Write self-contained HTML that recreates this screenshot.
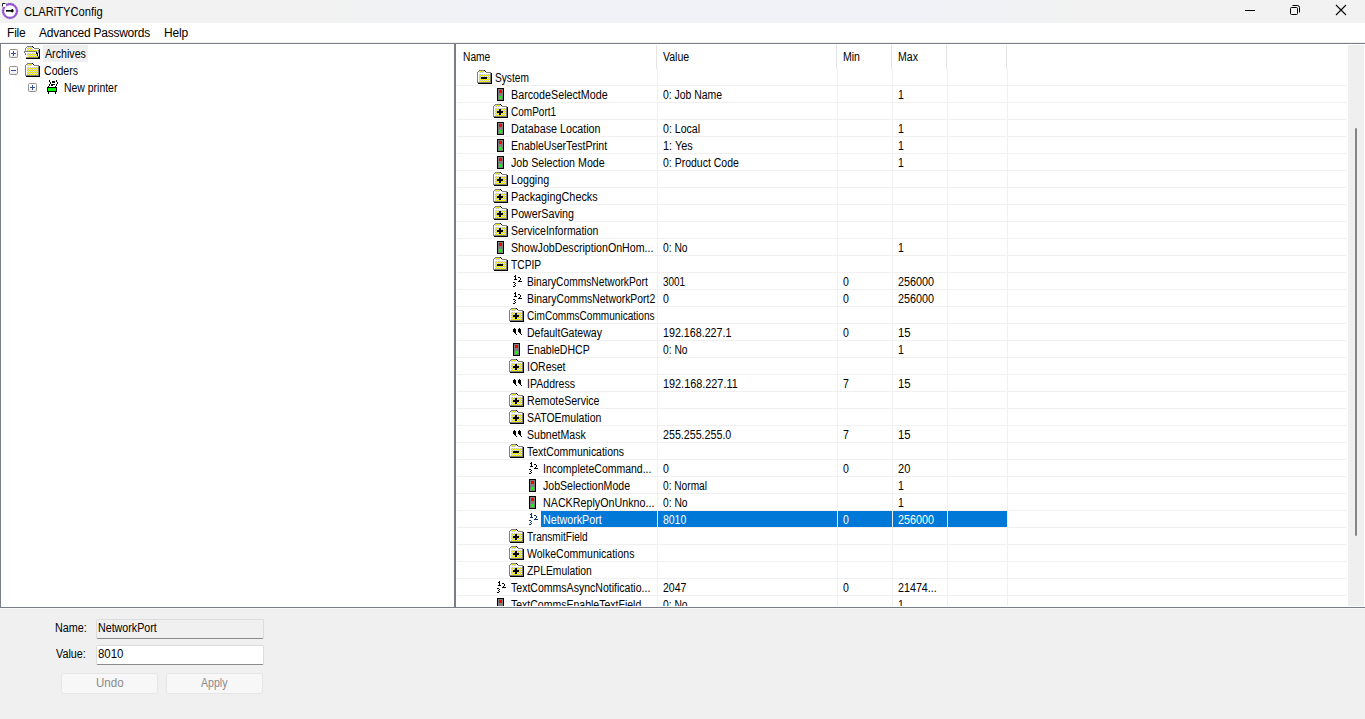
<!DOCTYPE html><html><head><meta charset="utf-8"><style>
html,body{margin:0;padding:0}
body{width:1365px;height:719px;position:relative;overflow:hidden;background:#f0f0f0;font-family:"Liberation Sans", sans-serif;}
.a{position:absolute}
.t{position:absolute;white-space:nowrap;line-height:16px;height:16px;font-size:11px;letter-spacing:-0.3px;transform-origin:0 0}
</style></head><body>
<svg width="0" height="0" style="position:absolute"><defs><linearGradient id="eg" x1="0" y1="0" x2="0" y2="1"><stop offset="0" stop-color="#ffffff"/><stop offset="0.55" stop-color="#fbfbfb"/><stop offset="1" stop-color="#e6e6e6"/></linearGradient><pattern id="dy" width="2" height="2" patternUnits="userSpaceOnUse"><rect width="2" height="2" fill="#c0c0c0"/><rect width="1" height="1" fill="#ffff00"/><rect x="1" y="1" width="1" height="1" fill="#ffff00"/></pattern></defs></svg>

<div class="a" style="left:0;top:0;width:1365px;height:23px;background:linear-gradient(90deg,#f2f2f2 0px,#f2f2f2 330px,#f0f2f7 470px,#f0f2f7 930px,#f2f2f2 1080px,#f2f2f2 1365px)"></div>
<svg class="a" style="left:0px;top:0px" width="20" height="22"><circle cx="10" cy="11" r="6.9" fill="#fff" stroke="#9657d2" stroke-width="2.1"/><circle cx="10" cy="11" r="7.9" fill="none" stroke="#2a1450" stroke-width="0.5" stroke-dasharray="1 1.5" opacity="0.7"/><rect x="2" y="3" width="4" height="4" fill="#fff"/><path d="M2.5 3.5 H5.5 M2.5 3.5 V6.5" stroke="#000" stroke-width="0.9"/><rect x="6" y="10" width="6" height="1.6" fill="#000"/><ellipse cx="12.3" cy="10.8" rx="1.3" ry="1.8" fill="#000"/></svg>
<div class="t" style="left:24px;top:4px;font-size:12px;line-height:17px;height:17px;color:#000;letter-spacing:0;transform:scaleX(0.930)">CLARiTYConfig</div>
<div class="a" style="left:1245px;top:10px;width:10px;height:1px;background:#000"></div>
<svg class="a" style="left:1289px;top:4px" width="12" height="12"><rect x="1.5" y="3.5" width="7" height="7" rx="1" fill="none" stroke="#000" stroke-width="1"/><path d="M3.5 1.5 H8.5 Q10.5 1.5 10.5 3.5 V8.5" fill="none" stroke="#000" stroke-width="1"/></svg>
<svg class="a" style="left:1335px;top:4px" width="12" height="12"><path d="M1 1 L11 11 M11 1 L1 11" stroke="#000" stroke-width="1.1"/></svg>
<div class="a" style="left:0;top:23px;width:1365px;height:19px;background:#fff"></div>
<div class="t" style="left:7px;top:25px;font-size:12px;color:#000;letter-spacing:-0.2px;line-height:17px">File</div>
<div class="t" style="left:39px;top:25px;font-size:12px;color:#000;letter-spacing:-0.25px;line-height:17px">Advanced Passwords</div>
<div class="t" style="left:164px;top:25px;font-size:12px;color:#000;letter-spacing:-0.2px;line-height:17px">Help</div>
<div class="a" style="left:0;top:42px;width:1365px;height:1px;background:#f0f0f0"></div>
<div class="a" style="left:0;top:43px;width:1365px;height:1px;background:#7a7e87"></div>
<div class="a" style="left:0;top:44px;width:454px;height:563px;background:#fff"></div>
<div class="a" style="left:0;top:43px;width:1px;height:565px;background:#7a7e87"></div>
<div class="a" style="left:456px;top:44px;width:909px;height:563px;background:#fff"></div>
<div class="a" style="left:454px;top:43px;width:2px;height:565px;background:#7a7e87"></div>
<div class="a" style="left:0;top:607px;width:1365px;height:1px;background:#7a7e87"></div>
<div class="a" style="left:0;top:608px;width:1365px;height:1px;background:#f7f7f7"></div>
<svg style="position:absolute;left:9px;top:49px" width="9" height="9"><rect x="0.5" y="0.5" width="8" height="8" rx="1.2" fill="url(#eg)" stroke="#929292" stroke-width="1"/><rect x="2" y="4" width="5" height="1" fill="#2f4f9a" shape-rendering="crispEdges"/><rect x="4" y="2" width="1" height="5" fill="#2f4f9a" shape-rendering="crispEdges"/></svg>
<svg style="position:absolute;left:9px;top:66px" width="9" height="9"><rect x="0.5" y="0.5" width="8" height="8" rx="1.2" fill="url(#eg)" stroke="#929292" stroke-width="1"/><rect x="2" y="4" width="5" height="1" fill="#2f4f9a" shape-rendering="crispEdges"/></svg>
<svg style="position:absolute;left:28px;top:83px" width="9" height="9"><rect x="0.5" y="0.5" width="8" height="8" rx="1.2" fill="url(#eg)" stroke="#929292" stroke-width="1"/><rect x="2" y="4" width="5" height="1" fill="#2f4f9a" shape-rendering="crispEdges"/><rect x="4" y="2" width="1" height="5" fill="#2f4f9a" shape-rendering="crispEdges"/></svg>
<svg style="position:absolute;left:24px;top:46px" width="16" height="13" shape-rendering="crispEdges"><rect x="3" y="0" width="5" height="1" fill="#808080"/><rect x="8" y="0" width="1" height="1" fill="#000000"/><rect x="2" y="1" width="1" height="1" fill="#808080"/><rect x="3" y="1" width="1" height="1" fill="#ffffff"/><rect x="4" y="1" width="5" height="1" fill="url(#dy)"/><rect x="9" y="1" width="1" height="1" fill="#000000"/><rect x="1" y="2" width="1" height="1" fill="#808080"/><rect x="2" y="2" width="1" height="1" fill="#ffffff"/><rect x="3" y="2" width="5" height="1" fill="url(#dy)"/><rect x="8" y="2" width="2" height="1" fill="#ffffff"/><rect x="10" y="2" width="5" height="1" fill="#808080"/><rect x="1" y="3" width="1" height="1" fill="#808080"/><rect x="2" y="3" width="1" height="1" fill="#ffffff"/><rect x="3" y="3" width="6" height="1" fill="url(#dy)"/><rect x="9" y="3" width="5" height="1" fill="#ffffff"/><rect x="15" y="3" width="1" height="1" fill="#000000"/><rect x="1" y="4" width="1" height="1" fill="#808080"/><rect x="2" y="4" width="1" height="1" fill="#ffffff"/><rect x="3" y="4" width="11" height="1" fill="url(#dy)"/><rect x="14" y="4" width="1" height="1" fill="#808080"/><rect x="15" y="4" width="1" height="1" fill="#000000"/><rect x="0" y="5" width="13" height="1" fill="#808080"/><rect x="13" y="5" width="1" height="1" fill="url(#dy)"/><rect x="14" y="5" width="1" height="1" fill="#808080"/><rect x="15" y="5" width="1" height="1" fill="#000000"/><rect x="0" y="6" width="1" height="1" fill="#808080"/><rect x="1" y="6" width="11" height="1" fill="#ffffff"/><rect x="12" y="6" width="1" height="1" fill="#000000"/><rect x="13" y="6" width="1" height="1" fill="url(#dy)"/><rect x="14" y="6" width="1" height="1" fill="#808080"/><rect x="15" y="6" width="1" height="1" fill="#000000"/><rect x="1" y="7" width="1" height="1" fill="#808080"/><rect x="2" y="7" width="1" height="1" fill="#ffffff"/><rect x="3" y="7" width="9" height="1" fill="url(#dy)"/><rect x="12" y="7" width="2" height="1" fill="#000000"/><rect x="15" y="7" width="1" height="1" fill="#000000"/><rect x="1" y="8" width="1" height="1" fill="#808080"/><rect x="2" y="8" width="1" height="1" fill="#ffffff"/><rect x="3" y="8" width="10" height="1" fill="url(#dy)"/><rect x="13" y="8" width="1" height="1" fill="#000000"/><rect x="15" y="8" width="1" height="1" fill="#000000"/><rect x="2" y="9" width="1" height="1" fill="#ffffff"/><rect x="3" y="9" width="10" height="1" fill="url(#dy)"/><rect x="13" y="9" width="1" height="1" fill="#000000"/><rect x="15" y="9" width="1" height="1" fill="#000000"/><rect x="3" y="10" width="1" height="1" fill="#ffffff"/><rect x="4" y="10" width="10" height="1" fill="url(#dy)"/><rect x="14" y="10" width="1" height="1" fill="#808080"/><rect x="15" y="10" width="1" height="1" fill="#000000"/><rect x="2" y="11" width="12" height="1" fill="#808080"/><rect x="14" y="11" width="2" height="1" fill="#000000"/><rect x="2" y="12" width="14" height="1" fill="#000000"/></svg>
<div class="a" style="left:43px;top:45px;width:45px;height:17px;background:#efefef"></div>
<div class="t" style="left:45px;top:46px;font-size:12px;line-height:17px;height:17px;color:#000;letter-spacing:0;transform:scaleX(0.890)">Archives</div>
<svg style="position:absolute;left:25px;top:63px" width="15" height="14" shape-rendering="crispEdges"><rect x="2" y="1" width="5" height="2" fill="url(#dy)"/><rect x="2" y="4" width="11" height="8" fill="url(#dy)"/><rect x="2" y="0" width="5" height="1" fill="#808080"/><rect x="0" y="2" width="1" height="11" fill="#808080"/><rect x="1" y="1" width="1" height="1" fill="#808080"/><rect x="9" y="2" width="5" height="1" fill="#808080"/><rect x="13" y="3" width="1" height="10" fill="#808080"/><rect x="1" y="12" width="13" height="1" fill="#808080"/><rect x="1" y="3" width="1" height="9" fill="#ffffff"/><rect x="1" y="3" width="12" height="1" fill="#ffffff"/><rect x="7" y="3" width="2" height="1" fill="#ffffff"/><rect x="7" y="0" width="1" height="1" fill="#000000"/><rect x="8" y="1" width="1" height="1" fill="#000000"/><rect x="14" y="3" width="1" height="11" fill="#000000"/><rect x="1" y="13" width="14" height="1" fill="#000000"/></svg>
<div class="t" style="left:44px;top:63px;font-size:12px;line-height:17px;height:17px;color:#000;letter-spacing:0;transform:scaleX(0.880)">Coders</div>
<svg style="position:absolute;left:47px;top:80px" width="11" height="14" shape-rendering="crispEdges"><rect x="2" y="0" width="1" height="1" fill="#000000"/><rect x="9" y="0" width="1" height="1" fill="#000000"/><rect x="2" y="1" width="1" height="1" fill="#000000"/><rect x="5" y="1" width="3" height="1" fill="#000000"/><rect x="9" y="1" width="1" height="1" fill="#000000"/><rect x="3" y="2" width="1" height="1" fill="#000000"/><rect x="5" y="2" width="3" height="1" fill="#000000"/><rect x="10" y="2" width="1" height="1" fill="#000000"/><rect x="3" y="3" width="1" height="1" fill="#000000"/><rect x="10" y="3" width="1" height="1" fill="#000000"/><rect x="2" y="4" width="1" height="1" fill="#000000"/><rect x="4" y="4" width="4" height="1" fill="#000000"/><rect x="9" y="4" width="1" height="1" fill="#000000"/><rect x="2" y="5" width="1" height="1" fill="#000000"/><rect x="4" y="5" width="2" height="1" fill="#000000"/><rect x="9" y="5" width="1" height="1" fill="#000000"/><rect x="1" y="6" width="1" height="1" fill="#000000"/><rect x="8" y="6" width="1" height="1" fill="#000000"/><rect x="0" y="7" width="10" height="1" fill="#000000"/><rect x="0" y="8" width="1" height="1" fill="#000000"/><rect x="1" y="8" width="8" height="1" fill="#00ff00"/><rect x="9" y="8" width="1" height="1" fill="#000000"/><rect x="0" y="9" width="1" height="1" fill="#000000"/><rect x="1" y="9" width="8" height="1" fill="#00ff00"/><rect x="9" y="9" width="1" height="1" fill="#000000"/><rect x="0" y="10" width="1" height="1" fill="#000000"/><rect x="1" y="10" width="8" height="1" fill="#00ff00"/><rect x="9" y="10" width="1" height="1" fill="#000000"/><rect x="0" y="11" width="10" height="1" fill="#000000"/><rect x="1" y="12" width="1" height="1" fill="#000000"/><rect x="8" y="12" width="1" height="1" fill="#000000"/><rect x="1" y="13" width="1" height="1" fill="#000000"/><rect x="8" y="13" width="1" height="1" fill="#000000"/></svg>
<div class="t" style="left:64px;top:80px;font-size:12px;line-height:17px;height:17px;color:#000;letter-spacing:0;transform:scaleX(0.870)">New printer</div>
<div class="t" style="left:463px;top:49px;font-size:12px;color:#000;letter-spacing:0;transform:scaleX(0.852)">Name</div>
<div class="t" style="left:663px;top:49px;font-size:12px;color:#000;letter-spacing:0;transform:scaleX(0.878)">Value</div>
<div class="t" style="left:843px;top:49px;font-size:12px;color:#000;letter-spacing:0;transform:scaleX(0.878)">Min</div>
<div class="t" style="left:898px;top:49px;font-size:12px;color:#000;letter-spacing:0;transform:scaleX(0.878)">Max</div>
<div class="a" style="left:656px;top:45px;width:1px;height:24px;background:#e5e5e5"></div>
<div class="a" style="left:836px;top:45px;width:1px;height:24px;background:#e5e5e5"></div>
<div class="a" style="left:891px;top:45px;width:1px;height:24px;background:#e5e5e5"></div>
<div class="a" style="left:946px;top:45px;width:1px;height:24px;background:#e5e5e5"></div>
<div class="a" style="left:1006px;top:45px;width:1px;height:24px;background:#e5e5e5"></div>
<div class="a" style="left:456px;top:69px;width:892px;height:537px;overflow:hidden">
<svg style="position:absolute;left:21px;top:1px" width="15" height="14" shape-rendering="crispEdges"><rect x="2" y="1" width="5" height="2" fill="url(#dy)"/><rect x="2" y="4" width="11" height="8" fill="url(#dy)"/><rect x="2" y="0" width="5" height="1" fill="#808080"/><rect x="0" y="2" width="1" height="11" fill="#808080"/><rect x="1" y="1" width="1" height="1" fill="#808080"/><rect x="9" y="2" width="5" height="1" fill="#808080"/><rect x="13" y="3" width="1" height="10" fill="#808080"/><rect x="1" y="12" width="13" height="1" fill="#808080"/><rect x="1" y="3" width="1" height="9" fill="#ffffff"/><rect x="1" y="3" width="12" height="1" fill="#ffffff"/><rect x="7" y="3" width="2" height="1" fill="#ffffff"/><rect x="7" y="0" width="1" height="1" fill="#000000"/><rect x="8" y="1" width="1" height="1" fill="#000000"/><rect x="14" y="3" width="1" height="11" fill="#000000"/><rect x="1" y="13" width="14" height="1" fill="#000000"/><rect x="4" y="7" width="6" height="2" fill="#000"/></svg>
<div class="t" style="left:39px;top:1px;font-size:12px;color:#000;letter-spacing:0;transform:scaleX(0.846)">System</div>
<div class="a" style="left:1px;top:16px;width:890px;height:1px;background:#f0f0f0"></div>
<svg style="position:absolute;left:41px;top:19px" width="7" height="13" shape-rendering="crispEdges"><rect x="0" y="0" width="7" height="13" fill="#000"/><rect x="1" y="1" width="5" height="11" fill="#808080"/><rect x="2" y="2" width="3" height="3" fill="#ff0000"/><rect x="2" y="8" width="3" height="3" fill="#00ff00"/></svg>
<div class="t" style="left:55px;top:18px;font-size:12px;color:#000;letter-spacing:0;transform:scaleX(0.895)">BarcodeSelectMode</div>
<div class="t" style="left:207px;top:18px;font-size:12px;color:#000;letter-spacing:0;transform:scaleX(0.868)">0: Job Name</div>
<div class="t" style="left:442px;top:18px;font-size:12px;color:#000;letter-spacing:0;transform:scaleX(0.878)">1</div>
<div class="a" style="left:1px;top:33px;width:890px;height:1px;background:#f0f0f0"></div>
<svg style="position:absolute;left:37px;top:35px" width="15" height="14" shape-rendering="crispEdges"><rect x="2" y="1" width="5" height="2" fill="url(#dy)"/><rect x="2" y="4" width="11" height="8" fill="url(#dy)"/><rect x="2" y="0" width="5" height="1" fill="#808080"/><rect x="0" y="2" width="1" height="11" fill="#808080"/><rect x="1" y="1" width="1" height="1" fill="#808080"/><rect x="9" y="2" width="5" height="1" fill="#808080"/><rect x="13" y="3" width="1" height="10" fill="#808080"/><rect x="1" y="12" width="13" height="1" fill="#808080"/><rect x="1" y="3" width="1" height="9" fill="#ffffff"/><rect x="1" y="3" width="12" height="1" fill="#ffffff"/><rect x="7" y="3" width="2" height="1" fill="#ffffff"/><rect x="7" y="0" width="1" height="1" fill="#000000"/><rect x="8" y="1" width="1" height="1" fill="#000000"/><rect x="14" y="3" width="1" height="11" fill="#000000"/><rect x="1" y="13" width="14" height="1" fill="#000000"/><rect x="4" y="7" width="6" height="2" fill="#000"/><rect x="6" y="5" width="2" height="6" fill="#000"/></svg>
<div class="t" style="left:55px;top:35px;font-size:12px;color:#000;letter-spacing:0;transform:scaleX(0.835)">ComPort1</div>
<div class="a" style="left:1px;top:50px;width:890px;height:1px;background:#f0f0f0"></div>
<svg style="position:absolute;left:41px;top:53px" width="7" height="13" shape-rendering="crispEdges"><rect x="0" y="0" width="7" height="13" fill="#000"/><rect x="1" y="1" width="5" height="11" fill="#808080"/><rect x="2" y="2" width="3" height="3" fill="#ff0000"/><rect x="2" y="8" width="3" height="3" fill="#00ff00"/></svg>
<div class="t" style="left:55px;top:52px;font-size:12px;color:#000;letter-spacing:0;transform:scaleX(0.895)">Database Location</div>
<div class="t" style="left:207px;top:52px;font-size:12px;color:#000;letter-spacing:0;transform:scaleX(0.881)">0: Local</div>
<div class="t" style="left:442px;top:52px;font-size:12px;color:#000;letter-spacing:0;transform:scaleX(0.878)">1</div>
<div class="a" style="left:1px;top:67px;width:890px;height:1px;background:#f0f0f0"></div>
<svg style="position:absolute;left:41px;top:70px" width="7" height="13" shape-rendering="crispEdges"><rect x="0" y="0" width="7" height="13" fill="#000"/><rect x="1" y="1" width="5" height="11" fill="#808080"/><rect x="2" y="2" width="3" height="3" fill="#ff0000"/><rect x="2" y="8" width="3" height="3" fill="#00ff00"/></svg>
<div class="t" style="left:55px;top:69px;font-size:12px;color:#000;letter-spacing:0;transform:scaleX(0.879)">EnableUserTestPrint</div>
<div class="t" style="left:207px;top:69px;font-size:12px;color:#000;letter-spacing:0;transform:scaleX(0.906)">1: Yes</div>
<div class="t" style="left:442px;top:69px;font-size:12px;color:#000;letter-spacing:0;transform:scaleX(0.878)">1</div>
<div class="a" style="left:1px;top:84px;width:890px;height:1px;background:#f0f0f0"></div>
<svg style="position:absolute;left:41px;top:87px" width="7" height="13" shape-rendering="crispEdges"><rect x="0" y="0" width="7" height="13" fill="#000"/><rect x="1" y="1" width="5" height="11" fill="#808080"/><rect x="2" y="2" width="3" height="3" fill="#ff0000"/><rect x="2" y="8" width="3" height="3" fill="#00ff00"/></svg>
<div class="t" style="left:55px;top:86px;font-size:12px;color:#000;letter-spacing:0;transform:scaleX(0.889)">Job Selection Mode</div>
<div class="t" style="left:207px;top:86px;font-size:12px;color:#000;letter-spacing:0;transform:scaleX(0.874)">0: Product Code</div>
<div class="t" style="left:442px;top:86px;font-size:12px;color:#000;letter-spacing:0;transform:scaleX(0.878)">1</div>
<div class="a" style="left:1px;top:101px;width:890px;height:1px;background:#f0f0f0"></div>
<svg style="position:absolute;left:37px;top:103px" width="15" height="14" shape-rendering="crispEdges"><rect x="2" y="1" width="5" height="2" fill="url(#dy)"/><rect x="2" y="4" width="11" height="8" fill="url(#dy)"/><rect x="2" y="0" width="5" height="1" fill="#808080"/><rect x="0" y="2" width="1" height="11" fill="#808080"/><rect x="1" y="1" width="1" height="1" fill="#808080"/><rect x="9" y="2" width="5" height="1" fill="#808080"/><rect x="13" y="3" width="1" height="10" fill="#808080"/><rect x="1" y="12" width="13" height="1" fill="#808080"/><rect x="1" y="3" width="1" height="9" fill="#ffffff"/><rect x="1" y="3" width="12" height="1" fill="#ffffff"/><rect x="7" y="3" width="2" height="1" fill="#ffffff"/><rect x="7" y="0" width="1" height="1" fill="#000000"/><rect x="8" y="1" width="1" height="1" fill="#000000"/><rect x="14" y="3" width="1" height="11" fill="#000000"/><rect x="1" y="13" width="14" height="1" fill="#000000"/><rect x="4" y="7" width="6" height="2" fill="#000"/><rect x="6" y="5" width="2" height="6" fill="#000"/></svg>
<div class="t" style="left:55px;top:103px;font-size:12px;color:#000;letter-spacing:0;transform:scaleX(0.893)">Logging</div>
<div class="a" style="left:1px;top:118px;width:890px;height:1px;background:#f0f0f0"></div>
<svg style="position:absolute;left:37px;top:120px" width="15" height="14" shape-rendering="crispEdges"><rect x="2" y="1" width="5" height="2" fill="url(#dy)"/><rect x="2" y="4" width="11" height="8" fill="url(#dy)"/><rect x="2" y="0" width="5" height="1" fill="#808080"/><rect x="0" y="2" width="1" height="11" fill="#808080"/><rect x="1" y="1" width="1" height="1" fill="#808080"/><rect x="9" y="2" width="5" height="1" fill="#808080"/><rect x="13" y="3" width="1" height="10" fill="#808080"/><rect x="1" y="12" width="13" height="1" fill="#808080"/><rect x="1" y="3" width="1" height="9" fill="#ffffff"/><rect x="1" y="3" width="12" height="1" fill="#ffffff"/><rect x="7" y="3" width="2" height="1" fill="#ffffff"/><rect x="7" y="0" width="1" height="1" fill="#000000"/><rect x="8" y="1" width="1" height="1" fill="#000000"/><rect x="14" y="3" width="1" height="11" fill="#000000"/><rect x="1" y="13" width="14" height="1" fill="#000000"/><rect x="4" y="7" width="6" height="2" fill="#000"/><rect x="6" y="5" width="2" height="6" fill="#000"/></svg>
<div class="t" style="left:55px;top:120px;font-size:12px;color:#000;letter-spacing:0;transform:scaleX(0.902)">PackagingChecks</div>
<div class="a" style="left:1px;top:135px;width:890px;height:1px;background:#f0f0f0"></div>
<svg style="position:absolute;left:37px;top:137px" width="15" height="14" shape-rendering="crispEdges"><rect x="2" y="1" width="5" height="2" fill="url(#dy)"/><rect x="2" y="4" width="11" height="8" fill="url(#dy)"/><rect x="2" y="0" width="5" height="1" fill="#808080"/><rect x="0" y="2" width="1" height="11" fill="#808080"/><rect x="1" y="1" width="1" height="1" fill="#808080"/><rect x="9" y="2" width="5" height="1" fill="#808080"/><rect x="13" y="3" width="1" height="10" fill="#808080"/><rect x="1" y="12" width="13" height="1" fill="#808080"/><rect x="1" y="3" width="1" height="9" fill="#ffffff"/><rect x="1" y="3" width="12" height="1" fill="#ffffff"/><rect x="7" y="3" width="2" height="1" fill="#ffffff"/><rect x="7" y="0" width="1" height="1" fill="#000000"/><rect x="8" y="1" width="1" height="1" fill="#000000"/><rect x="14" y="3" width="1" height="11" fill="#000000"/><rect x="1" y="13" width="14" height="1" fill="#000000"/><rect x="4" y="7" width="6" height="2" fill="#000"/><rect x="6" y="5" width="2" height="6" fill="#000"/></svg>
<div class="t" style="left:55px;top:137px;font-size:12px;color:#000;letter-spacing:0;transform:scaleX(0.891)">PowerSaving</div>
<div class="a" style="left:1px;top:152px;width:890px;height:1px;background:#f0f0f0"></div>
<svg style="position:absolute;left:37px;top:154px" width="15" height="14" shape-rendering="crispEdges"><rect x="2" y="1" width="5" height="2" fill="url(#dy)"/><rect x="2" y="4" width="11" height="8" fill="url(#dy)"/><rect x="2" y="0" width="5" height="1" fill="#808080"/><rect x="0" y="2" width="1" height="11" fill="#808080"/><rect x="1" y="1" width="1" height="1" fill="#808080"/><rect x="9" y="2" width="5" height="1" fill="#808080"/><rect x="13" y="3" width="1" height="10" fill="#808080"/><rect x="1" y="12" width="13" height="1" fill="#808080"/><rect x="1" y="3" width="1" height="9" fill="#ffffff"/><rect x="1" y="3" width="12" height="1" fill="#ffffff"/><rect x="7" y="3" width="2" height="1" fill="#ffffff"/><rect x="7" y="0" width="1" height="1" fill="#000000"/><rect x="8" y="1" width="1" height="1" fill="#000000"/><rect x="14" y="3" width="1" height="11" fill="#000000"/><rect x="1" y="13" width="14" height="1" fill="#000000"/><rect x="4" y="7" width="6" height="2" fill="#000"/><rect x="6" y="5" width="2" height="6" fill="#000"/></svg>
<div class="t" style="left:55px;top:154px;font-size:12px;color:#000;letter-spacing:0;transform:scaleX(0.873)">ServiceInformation</div>
<div class="a" style="left:1px;top:169px;width:890px;height:1px;background:#f0f0f0"></div>
<svg style="position:absolute;left:41px;top:172px" width="7" height="13" shape-rendering="crispEdges"><rect x="0" y="0" width="7" height="13" fill="#000"/><rect x="1" y="1" width="5" height="11" fill="#808080"/><rect x="2" y="2" width="3" height="3" fill="#ff0000"/><rect x="2" y="8" width="3" height="3" fill="#00ff00"/></svg>
<div class="t" style="left:55px;top:171px;font-size:12px;color:#000;letter-spacing:0;transform:scaleX(0.886)">ShowJobDescriptionOnHom...</div>
<div class="t" style="left:207px;top:171px;font-size:12px;color:#000;letter-spacing:0;transform:scaleX(0.855)">0: No</div>
<div class="t" style="left:442px;top:171px;font-size:12px;color:#000;letter-spacing:0;transform:scaleX(0.878)">1</div>
<div class="a" style="left:1px;top:186px;width:890px;height:1px;background:#f0f0f0"></div>
<svg style="position:absolute;left:37px;top:188px" width="15" height="14" shape-rendering="crispEdges"><rect x="2" y="1" width="5" height="2" fill="url(#dy)"/><rect x="2" y="4" width="11" height="8" fill="url(#dy)"/><rect x="2" y="0" width="5" height="1" fill="#808080"/><rect x="0" y="2" width="1" height="11" fill="#808080"/><rect x="1" y="1" width="1" height="1" fill="#808080"/><rect x="9" y="2" width="5" height="1" fill="#808080"/><rect x="13" y="3" width="1" height="10" fill="#808080"/><rect x="1" y="12" width="13" height="1" fill="#808080"/><rect x="1" y="3" width="1" height="9" fill="#ffffff"/><rect x="1" y="3" width="12" height="1" fill="#ffffff"/><rect x="7" y="3" width="2" height="1" fill="#ffffff"/><rect x="7" y="0" width="1" height="1" fill="#000000"/><rect x="8" y="1" width="1" height="1" fill="#000000"/><rect x="14" y="3" width="1" height="11" fill="#000000"/><rect x="1" y="13" width="14" height="1" fill="#000000"/><rect x="4" y="7" width="6" height="2" fill="#000"/></svg>
<div class="t" style="left:55px;top:188px;font-size:12px;color:#000;letter-spacing:0;transform:scaleX(0.854)">TCPIP</div>
<div class="a" style="left:1px;top:203px;width:890px;height:1px;background:#f0f0f0"></div>
<svg style="position:absolute;left:57px;top:206px" width="9" height="12" shape-rendering="crispEdges"><rect x="2" y="0" width="1" height="5" fill="#000"/><rect x="1" y="1" width="1" height="1" fill="#000"/><rect x="1" y="4" width="3" height="1" fill="#000"/><rect x="5" y="2" width="2" height="1" fill="#000"/><rect x="7" y="3" width="1" height="2" fill="#000"/><rect x="6" y="5" width="1" height="1" fill="#000"/><rect x="5" y="6" width="4" height="1" fill="#000"/><rect x="0" y="7" width="2" height="1" fill="#000"/><rect x="2" y="8" width="1" height="1" fill="#000"/><rect x="1" y="9" width="1" height="1" fill="#000"/><rect x="2" y="10" width="1" height="1" fill="#000"/><rect x="0" y="11" width="2" height="1" fill="#000"/></svg>
<div class="t" style="left:71px;top:205px;font-size:12px;color:#000;letter-spacing:0;transform:scaleX(0.854)">BinaryCommsNetworkPort</div>
<div class="t" style="left:207px;top:205px;font-size:12px;color:#000;letter-spacing:0;transform:scaleX(0.830)">3001</div>
<div class="t" style="left:387px;top:205px;font-size:12px;color:#000;letter-spacing:0;transform:scaleX(0.878)">0</div>
<div class="t" style="left:442px;top:205px;font-size:12px;color:#000;letter-spacing:0;transform:scaleX(0.900)">256000</div>
<div class="a" style="left:1px;top:220px;width:890px;height:1px;background:#f0f0f0"></div>
<svg style="position:absolute;left:57px;top:223px" width="9" height="12" shape-rendering="crispEdges"><rect x="2" y="0" width="1" height="5" fill="#000"/><rect x="1" y="1" width="1" height="1" fill="#000"/><rect x="1" y="4" width="3" height="1" fill="#000"/><rect x="5" y="2" width="2" height="1" fill="#000"/><rect x="7" y="3" width="1" height="2" fill="#000"/><rect x="6" y="5" width="1" height="1" fill="#000"/><rect x="5" y="6" width="4" height="1" fill="#000"/><rect x="0" y="7" width="2" height="1" fill="#000"/><rect x="2" y="8" width="1" height="1" fill="#000"/><rect x="1" y="9" width="1" height="1" fill="#000"/><rect x="2" y="10" width="1" height="1" fill="#000"/><rect x="0" y="11" width="2" height="1" fill="#000"/></svg>
<div class="t" style="left:71px;top:222px;font-size:12px;color:#000;letter-spacing:0;transform:scaleX(0.866)">BinaryCommsNetworkPort2</div>
<div class="t" style="left:207px;top:222px;font-size:12px;color:#000;letter-spacing:0;transform:scaleX(0.878)">0</div>
<div class="t" style="left:387px;top:222px;font-size:12px;color:#000;letter-spacing:0;transform:scaleX(0.878)">0</div>
<div class="t" style="left:442px;top:222px;font-size:12px;color:#000;letter-spacing:0;transform:scaleX(0.900)">256000</div>
<div class="a" style="left:1px;top:237px;width:890px;height:1px;background:#f0f0f0"></div>
<svg style="position:absolute;left:53px;top:239px" width="15" height="14" shape-rendering="crispEdges"><rect x="2" y="1" width="5" height="2" fill="url(#dy)"/><rect x="2" y="4" width="11" height="8" fill="url(#dy)"/><rect x="2" y="0" width="5" height="1" fill="#808080"/><rect x="0" y="2" width="1" height="11" fill="#808080"/><rect x="1" y="1" width="1" height="1" fill="#808080"/><rect x="9" y="2" width="5" height="1" fill="#808080"/><rect x="13" y="3" width="1" height="10" fill="#808080"/><rect x="1" y="12" width="13" height="1" fill="#808080"/><rect x="1" y="3" width="1" height="9" fill="#ffffff"/><rect x="1" y="3" width="12" height="1" fill="#ffffff"/><rect x="7" y="3" width="2" height="1" fill="#ffffff"/><rect x="7" y="0" width="1" height="1" fill="#000000"/><rect x="8" y="1" width="1" height="1" fill="#000000"/><rect x="14" y="3" width="1" height="11" fill="#000000"/><rect x="1" y="13" width="14" height="1" fill="#000000"/><rect x="4" y="7" width="6" height="2" fill="#000"/><rect x="6" y="5" width="2" height="6" fill="#000"/></svg>
<div class="t" style="left:71px;top:239px;font-size:12px;color:#000;letter-spacing:0;transform:scaleX(0.839)">CimCommsCommunications</div>
<div class="a" style="left:1px;top:254px;width:890px;height:1px;background:#f0f0f0"></div>
<svg style="position:absolute;left:57px;top:259px" width="9" height="7" shape-rendering="crispEdges"><rect x="1" y="0" width="1" height="1" fill="#000000"/><rect x="6" y="0" width="1" height="1" fill="#000000"/><rect x="0" y="1" width="3" height="1" fill="#000000"/><rect x="5" y="1" width="3" height="1" fill="#000000"/><rect x="0" y="2" width="3" height="1" fill="#000000"/><rect x="5" y="2" width="3" height="1" fill="#000000"/><rect x="0" y="3" width="3" height="1" fill="#000000"/><rect x="5" y="3" width="3" height="1" fill="#000000"/><rect x="1" y="4" width="2" height="1" fill="#000000"/><rect x="6" y="4" width="2" height="1" fill="#000000"/><rect x="2" y="5" width="1" height="1" fill="#000000"/><rect x="7" y="5" width="1" height="1" fill="#000000"/><rect x="3" y="6" width="1" height="1" fill="#000000"/><rect x="8" y="6" width="1" height="1" fill="#000000"/></svg>
<div class="t" style="left:71px;top:256px;font-size:12px;color:#000;letter-spacing:0;transform:scaleX(0.878)">DefaultGateway</div>
<div class="t" style="left:207px;top:256px;font-size:12px;color:#000;letter-spacing:0;transform:scaleX(0.892)">192.168.227.1</div>
<div class="t" style="left:387px;top:256px;font-size:12px;color:#000;letter-spacing:0;transform:scaleX(0.878)">0</div>
<div class="t" style="left:442px;top:256px;font-size:12px;color:#000;letter-spacing:0;transform:scaleX(0.942)">15</div>
<div class="a" style="left:1px;top:271px;width:890px;height:1px;background:#f0f0f0"></div>
<svg style="position:absolute;left:57px;top:274px" width="7" height="13" shape-rendering="crispEdges"><rect x="0" y="0" width="7" height="13" fill="#000"/><rect x="1" y="1" width="5" height="11" fill="#808080"/><rect x="2" y="2" width="3" height="3" fill="#ff0000"/><rect x="2" y="8" width="3" height="3" fill="#00ff00"/></svg>
<div class="t" style="left:71px;top:273px;font-size:12px;color:#000;letter-spacing:0;transform:scaleX(0.879)">EnableDHCP</div>
<div class="t" style="left:207px;top:273px;font-size:12px;color:#000;letter-spacing:0;transform:scaleX(0.855)">0: No</div>
<div class="t" style="left:442px;top:273px;font-size:12px;color:#000;letter-spacing:0;transform:scaleX(0.878)">1</div>
<div class="a" style="left:1px;top:288px;width:890px;height:1px;background:#f0f0f0"></div>
<svg style="position:absolute;left:53px;top:290px" width="15" height="14" shape-rendering="crispEdges"><rect x="2" y="1" width="5" height="2" fill="url(#dy)"/><rect x="2" y="4" width="11" height="8" fill="url(#dy)"/><rect x="2" y="0" width="5" height="1" fill="#808080"/><rect x="0" y="2" width="1" height="11" fill="#808080"/><rect x="1" y="1" width="1" height="1" fill="#808080"/><rect x="9" y="2" width="5" height="1" fill="#808080"/><rect x="13" y="3" width="1" height="10" fill="#808080"/><rect x="1" y="12" width="13" height="1" fill="#808080"/><rect x="1" y="3" width="1" height="9" fill="#ffffff"/><rect x="1" y="3" width="12" height="1" fill="#ffffff"/><rect x="7" y="3" width="2" height="1" fill="#ffffff"/><rect x="7" y="0" width="1" height="1" fill="#000000"/><rect x="8" y="1" width="1" height="1" fill="#000000"/><rect x="14" y="3" width="1" height="11" fill="#000000"/><rect x="1" y="13" width="14" height="1" fill="#000000"/><rect x="4" y="7" width="6" height="2" fill="#000"/><rect x="6" y="5" width="2" height="6" fill="#000"/></svg>
<div class="t" style="left:71px;top:290px;font-size:12px;color:#000;letter-spacing:0;transform:scaleX(0.874)">IOReset</div>
<div class="a" style="left:1px;top:305px;width:890px;height:1px;background:#f0f0f0"></div>
<svg style="position:absolute;left:57px;top:310px" width="9" height="7" shape-rendering="crispEdges"><rect x="1" y="0" width="1" height="1" fill="#000000"/><rect x="6" y="0" width="1" height="1" fill="#000000"/><rect x="0" y="1" width="3" height="1" fill="#000000"/><rect x="5" y="1" width="3" height="1" fill="#000000"/><rect x="0" y="2" width="3" height="1" fill="#000000"/><rect x="5" y="2" width="3" height="1" fill="#000000"/><rect x="0" y="3" width="3" height="1" fill="#000000"/><rect x="5" y="3" width="3" height="1" fill="#000000"/><rect x="1" y="4" width="2" height="1" fill="#000000"/><rect x="6" y="4" width="2" height="1" fill="#000000"/><rect x="2" y="5" width="1" height="1" fill="#000000"/><rect x="7" y="5" width="1" height="1" fill="#000000"/><rect x="3" y="6" width="1" height="1" fill="#000000"/><rect x="8" y="6" width="1" height="1" fill="#000000"/></svg>
<div class="t" style="left:71px;top:307px;font-size:12px;color:#000;letter-spacing:0;transform:scaleX(0.881)">IPAddress</div>
<div class="t" style="left:207px;top:307px;font-size:12px;color:#000;letter-spacing:0;transform:scaleX(0.905)">192.168.227.11</div>
<div class="t" style="left:387px;top:307px;font-size:12px;color:#000;letter-spacing:0;transform:scaleX(0.878)">7</div>
<div class="t" style="left:442px;top:307px;font-size:12px;color:#000;letter-spacing:0;transform:scaleX(0.942)">15</div>
<div class="a" style="left:1px;top:322px;width:890px;height:1px;background:#f0f0f0"></div>
<svg style="position:absolute;left:53px;top:324px" width="15" height="14" shape-rendering="crispEdges"><rect x="2" y="1" width="5" height="2" fill="url(#dy)"/><rect x="2" y="4" width="11" height="8" fill="url(#dy)"/><rect x="2" y="0" width="5" height="1" fill="#808080"/><rect x="0" y="2" width="1" height="11" fill="#808080"/><rect x="1" y="1" width="1" height="1" fill="#808080"/><rect x="9" y="2" width="5" height="1" fill="#808080"/><rect x="13" y="3" width="1" height="10" fill="#808080"/><rect x="1" y="12" width="13" height="1" fill="#808080"/><rect x="1" y="3" width="1" height="9" fill="#ffffff"/><rect x="1" y="3" width="12" height="1" fill="#ffffff"/><rect x="7" y="3" width="2" height="1" fill="#ffffff"/><rect x="7" y="0" width="1" height="1" fill="#000000"/><rect x="8" y="1" width="1" height="1" fill="#000000"/><rect x="14" y="3" width="1" height="11" fill="#000000"/><rect x="1" y="13" width="14" height="1" fill="#000000"/><rect x="4" y="7" width="6" height="2" fill="#000"/><rect x="6" y="5" width="2" height="6" fill="#000"/></svg>
<div class="t" style="left:71px;top:324px;font-size:12px;color:#000;letter-spacing:0;transform:scaleX(0.884)">RemoteService</div>
<div class="a" style="left:1px;top:339px;width:890px;height:1px;background:#f0f0f0"></div>
<svg style="position:absolute;left:53px;top:341px" width="15" height="14" shape-rendering="crispEdges"><rect x="2" y="1" width="5" height="2" fill="url(#dy)"/><rect x="2" y="4" width="11" height="8" fill="url(#dy)"/><rect x="2" y="0" width="5" height="1" fill="#808080"/><rect x="0" y="2" width="1" height="11" fill="#808080"/><rect x="1" y="1" width="1" height="1" fill="#808080"/><rect x="9" y="2" width="5" height="1" fill="#808080"/><rect x="13" y="3" width="1" height="10" fill="#808080"/><rect x="1" y="12" width="13" height="1" fill="#808080"/><rect x="1" y="3" width="1" height="9" fill="#ffffff"/><rect x="1" y="3" width="12" height="1" fill="#ffffff"/><rect x="7" y="3" width="2" height="1" fill="#ffffff"/><rect x="7" y="0" width="1" height="1" fill="#000000"/><rect x="8" y="1" width="1" height="1" fill="#000000"/><rect x="14" y="3" width="1" height="11" fill="#000000"/><rect x="1" y="13" width="14" height="1" fill="#000000"/><rect x="4" y="7" width="6" height="2" fill="#000"/><rect x="6" y="5" width="2" height="6" fill="#000"/></svg>
<div class="t" style="left:71px;top:341px;font-size:12px;color:#000;letter-spacing:0;transform:scaleX(0.875)">SATOEmulation</div>
<div class="a" style="left:1px;top:356px;width:890px;height:1px;background:#f0f0f0"></div>
<svg style="position:absolute;left:57px;top:361px" width="9" height="7" shape-rendering="crispEdges"><rect x="1" y="0" width="1" height="1" fill="#000000"/><rect x="6" y="0" width="1" height="1" fill="#000000"/><rect x="0" y="1" width="3" height="1" fill="#000000"/><rect x="5" y="1" width="3" height="1" fill="#000000"/><rect x="0" y="2" width="3" height="1" fill="#000000"/><rect x="5" y="2" width="3" height="1" fill="#000000"/><rect x="0" y="3" width="3" height="1" fill="#000000"/><rect x="5" y="3" width="3" height="1" fill="#000000"/><rect x="1" y="4" width="2" height="1" fill="#000000"/><rect x="6" y="4" width="2" height="1" fill="#000000"/><rect x="2" y="5" width="1" height="1" fill="#000000"/><rect x="7" y="5" width="1" height="1" fill="#000000"/><rect x="3" y="6" width="1" height="1" fill="#000000"/><rect x="8" y="6" width="1" height="1" fill="#000000"/></svg>
<div class="t" style="left:71px;top:358px;font-size:12px;color:#000;letter-spacing:0;transform:scaleX(0.882)">SubnetMask</div>
<div class="t" style="left:207px;top:358px;font-size:12px;color:#000;letter-spacing:0;transform:scaleX(0.890)">255.255.255.0</div>
<div class="t" style="left:387px;top:358px;font-size:12px;color:#000;letter-spacing:0;transform:scaleX(0.878)">7</div>
<div class="t" style="left:442px;top:358px;font-size:12px;color:#000;letter-spacing:0;transform:scaleX(0.942)">15</div>
<div class="a" style="left:1px;top:373px;width:890px;height:1px;background:#f0f0f0"></div>
<svg style="position:absolute;left:53px;top:375px" width="15" height="14" shape-rendering="crispEdges"><rect x="2" y="1" width="5" height="2" fill="url(#dy)"/><rect x="2" y="4" width="11" height="8" fill="url(#dy)"/><rect x="2" y="0" width="5" height="1" fill="#808080"/><rect x="0" y="2" width="1" height="11" fill="#808080"/><rect x="1" y="1" width="1" height="1" fill="#808080"/><rect x="9" y="2" width="5" height="1" fill="#808080"/><rect x="13" y="3" width="1" height="10" fill="#808080"/><rect x="1" y="12" width="13" height="1" fill="#808080"/><rect x="1" y="3" width="1" height="9" fill="#ffffff"/><rect x="1" y="3" width="12" height="1" fill="#ffffff"/><rect x="7" y="3" width="2" height="1" fill="#ffffff"/><rect x="7" y="0" width="1" height="1" fill="#000000"/><rect x="8" y="1" width="1" height="1" fill="#000000"/><rect x="14" y="3" width="1" height="11" fill="#000000"/><rect x="1" y="13" width="14" height="1" fill="#000000"/><rect x="4" y="7" width="6" height="2" fill="#000"/></svg>
<div class="t" style="left:71px;top:375px;font-size:12px;color:#000;letter-spacing:0;transform:scaleX(0.871)">TextCommunications</div>
<div class="a" style="left:1px;top:390px;width:890px;height:1px;background:#f0f0f0"></div>
<svg style="position:absolute;left:73px;top:393px" width="9" height="12" shape-rendering="crispEdges"><rect x="2" y="0" width="1" height="5" fill="#000"/><rect x="1" y="1" width="1" height="1" fill="#000"/><rect x="1" y="4" width="3" height="1" fill="#000"/><rect x="5" y="2" width="2" height="1" fill="#000"/><rect x="7" y="3" width="1" height="2" fill="#000"/><rect x="6" y="5" width="1" height="1" fill="#000"/><rect x="5" y="6" width="4" height="1" fill="#000"/><rect x="0" y="7" width="2" height="1" fill="#000"/><rect x="2" y="8" width="1" height="1" fill="#000"/><rect x="1" y="9" width="1" height="1" fill="#000"/><rect x="2" y="10" width="1" height="1" fill="#000"/><rect x="0" y="11" width="2" height="1" fill="#000"/></svg>
<div class="t" style="left:87px;top:392px;font-size:12px;color:#000;letter-spacing:0;transform:scaleX(0.874)">IncompleteCommand...</div>
<div class="t" style="left:207px;top:392px;font-size:12px;color:#000;letter-spacing:0;transform:scaleX(0.878)">0</div>
<div class="t" style="left:387px;top:392px;font-size:12px;color:#000;letter-spacing:0;transform:scaleX(0.878)">0</div>
<div class="t" style="left:442px;top:392px;font-size:12px;color:#000;letter-spacing:0;transform:scaleX(0.923)">20</div>
<div class="a" style="left:1px;top:407px;width:890px;height:1px;background:#f0f0f0"></div>
<svg style="position:absolute;left:73px;top:410px" width="7" height="13" shape-rendering="crispEdges"><rect x="0" y="0" width="7" height="13" fill="#000"/><rect x="1" y="1" width="5" height="11" fill="#808080"/><rect x="2" y="2" width="3" height="3" fill="#ff0000"/><rect x="2" y="8" width="3" height="3" fill="#00ff00"/></svg>
<div class="t" style="left:87px;top:409px;font-size:12px;color:#000;letter-spacing:0;transform:scaleX(0.882)">JobSelectionMode</div>
<div class="t" style="left:207px;top:409px;font-size:12px;color:#000;letter-spacing:0;transform:scaleX(0.846)">0: Normal</div>
<div class="t" style="left:442px;top:409px;font-size:12px;color:#000;letter-spacing:0;transform:scaleX(0.878)">1</div>
<div class="a" style="left:1px;top:424px;width:890px;height:1px;background:#f0f0f0"></div>
<svg style="position:absolute;left:73px;top:427px" width="7" height="13" shape-rendering="crispEdges"><rect x="0" y="0" width="7" height="13" fill="#000"/><rect x="1" y="1" width="5" height="11" fill="#808080"/><rect x="2" y="2" width="3" height="3" fill="#ff0000"/><rect x="2" y="8" width="3" height="3" fill="#00ff00"/></svg>
<div class="t" style="left:87px;top:426px;font-size:12px;color:#000;letter-spacing:0;transform:scaleX(0.893)">NACKReplyOnUnkno...</div>
<div class="t" style="left:207px;top:426px;font-size:12px;color:#000;letter-spacing:0;transform:scaleX(0.855)">0: No</div>
<div class="t" style="left:442px;top:426px;font-size:12px;color:#000;letter-spacing:0;transform:scaleX(0.878)">1</div>
<div class="a" style="left:1px;top:441px;width:890px;height:1px;background:#f0f0f0"></div>
<div class="a" style="left:85px;top:442px;width:466px;height:16px;background:#0078d7"></div>
<svg style="position:absolute;left:73px;top:444px" width="9" height="12" shape-rendering="crispEdges"><rect x="2" y="0" width="1" height="5" fill="#0b2f66"/><rect x="1" y="1" width="1" height="1" fill="#0b2f66"/><rect x="1" y="4" width="3" height="1" fill="#0b2f66"/><rect x="5" y="2" width="2" height="1" fill="#0b2f66"/><rect x="7" y="3" width="1" height="2" fill="#0b2f66"/><rect x="6" y="5" width="1" height="1" fill="#0b2f66"/><rect x="5" y="6" width="4" height="1" fill="#0b2f66"/><rect x="0" y="7" width="2" height="1" fill="#0b2f66"/><rect x="2" y="8" width="1" height="1" fill="#0b2f66"/><rect x="1" y="9" width="1" height="1" fill="#0b2f66"/><rect x="2" y="10" width="1" height="1" fill="#0b2f66"/><rect x="0" y="11" width="2" height="1" fill="#0b2f66"/></svg>
<div class="t" style="left:87px;top:443px;font-size:12px;color:#fff;letter-spacing:0;transform:scaleX(0.889)">NetworkPort</div>
<div class="t" style="left:207px;top:443px;font-size:12px;color:#fff;letter-spacing:0;transform:scaleX(0.870)">8010</div>
<div class="t" style="left:387px;top:443px;font-size:12px;color:#fff;letter-spacing:0;transform:scaleX(0.878)">0</div>
<div class="t" style="left:442px;top:443px;font-size:12px;color:#fff;letter-spacing:0;transform:scaleX(0.900)">256000</div>
<div class="a" style="left:1px;top:458px;width:890px;height:1px;background:#f0f0f0"></div>
<svg style="position:absolute;left:53px;top:460px" width="15" height="14" shape-rendering="crispEdges"><rect x="2" y="1" width="5" height="2" fill="url(#dy)"/><rect x="2" y="4" width="11" height="8" fill="url(#dy)"/><rect x="2" y="0" width="5" height="1" fill="#808080"/><rect x="0" y="2" width="1" height="11" fill="#808080"/><rect x="1" y="1" width="1" height="1" fill="#808080"/><rect x="9" y="2" width="5" height="1" fill="#808080"/><rect x="13" y="3" width="1" height="10" fill="#808080"/><rect x="1" y="12" width="13" height="1" fill="#808080"/><rect x="1" y="3" width="1" height="9" fill="#ffffff"/><rect x="1" y="3" width="12" height="1" fill="#ffffff"/><rect x="7" y="3" width="2" height="1" fill="#ffffff"/><rect x="7" y="0" width="1" height="1" fill="#000000"/><rect x="8" y="1" width="1" height="1" fill="#000000"/><rect x="14" y="3" width="1" height="11" fill="#000000"/><rect x="1" y="13" width="14" height="1" fill="#000000"/><rect x="4" y="7" width="6" height="2" fill="#000"/><rect x="6" y="5" width="2" height="6" fill="#000"/></svg>
<div class="t" style="left:71px;top:460px;font-size:12px;color:#000;letter-spacing:0;transform:scaleX(0.839)">TransmitField</div>
<div class="a" style="left:1px;top:475px;width:890px;height:1px;background:#f0f0f0"></div>
<svg style="position:absolute;left:53px;top:477px" width="15" height="14" shape-rendering="crispEdges"><rect x="2" y="1" width="5" height="2" fill="url(#dy)"/><rect x="2" y="4" width="11" height="8" fill="url(#dy)"/><rect x="2" y="0" width="5" height="1" fill="#808080"/><rect x="0" y="2" width="1" height="11" fill="#808080"/><rect x="1" y="1" width="1" height="1" fill="#808080"/><rect x="9" y="2" width="5" height="1" fill="#808080"/><rect x="13" y="3" width="1" height="10" fill="#808080"/><rect x="1" y="12" width="13" height="1" fill="#808080"/><rect x="1" y="3" width="1" height="9" fill="#ffffff"/><rect x="1" y="3" width="12" height="1" fill="#ffffff"/><rect x="7" y="3" width="2" height="1" fill="#ffffff"/><rect x="7" y="0" width="1" height="1" fill="#000000"/><rect x="8" y="1" width="1" height="1" fill="#000000"/><rect x="14" y="3" width="1" height="11" fill="#000000"/><rect x="1" y="13" width="14" height="1" fill="#000000"/><rect x="4" y="7" width="6" height="2" fill="#000"/><rect x="6" y="5" width="2" height="6" fill="#000"/></svg>
<div class="t" style="left:71px;top:477px;font-size:12px;color:#000;letter-spacing:0;transform:scaleX(0.877)">WolkeCommunications</div>
<div class="a" style="left:1px;top:492px;width:890px;height:1px;background:#f0f0f0"></div>
<svg style="position:absolute;left:53px;top:494px" width="15" height="14" shape-rendering="crispEdges"><rect x="2" y="1" width="5" height="2" fill="url(#dy)"/><rect x="2" y="4" width="11" height="8" fill="url(#dy)"/><rect x="2" y="0" width="5" height="1" fill="#808080"/><rect x="0" y="2" width="1" height="11" fill="#808080"/><rect x="1" y="1" width="1" height="1" fill="#808080"/><rect x="9" y="2" width="5" height="1" fill="#808080"/><rect x="13" y="3" width="1" height="10" fill="#808080"/><rect x="1" y="12" width="13" height="1" fill="#808080"/><rect x="1" y="3" width="1" height="9" fill="#ffffff"/><rect x="1" y="3" width="12" height="1" fill="#ffffff"/><rect x="7" y="3" width="2" height="1" fill="#ffffff"/><rect x="7" y="0" width="1" height="1" fill="#000000"/><rect x="8" y="1" width="1" height="1" fill="#000000"/><rect x="14" y="3" width="1" height="11" fill="#000000"/><rect x="1" y="13" width="14" height="1" fill="#000000"/><rect x="4" y="7" width="6" height="2" fill="#000"/><rect x="6" y="5" width="2" height="6" fill="#000"/></svg>
<div class="t" style="left:71px;top:494px;font-size:12px;color:#000;letter-spacing:0;transform:scaleX(0.860)">ZPLEmulation</div>
<div class="a" style="left:1px;top:509px;width:890px;height:1px;background:#f0f0f0"></div>
<svg style="position:absolute;left:41px;top:512px" width="9" height="12" shape-rendering="crispEdges"><rect x="2" y="0" width="1" height="5" fill="#000"/><rect x="1" y="1" width="1" height="1" fill="#000"/><rect x="1" y="4" width="3" height="1" fill="#000"/><rect x="5" y="2" width="2" height="1" fill="#000"/><rect x="7" y="3" width="1" height="2" fill="#000"/><rect x="6" y="5" width="1" height="1" fill="#000"/><rect x="5" y="6" width="4" height="1" fill="#000"/><rect x="0" y="7" width="2" height="1" fill="#000"/><rect x="2" y="8" width="1" height="1" fill="#000"/><rect x="1" y="9" width="1" height="1" fill="#000"/><rect x="2" y="10" width="1" height="1" fill="#000"/><rect x="0" y="11" width="2" height="1" fill="#000"/></svg>
<div class="t" style="left:55px;top:511px;font-size:12px;color:#000;letter-spacing:0;transform:scaleX(0.878)">TextCommsAsyncNotificatio...</div>
<div class="t" style="left:207px;top:511px;font-size:12px;color:#000;letter-spacing:0;transform:scaleX(0.878)">2047</div>
<div class="t" style="left:387px;top:511px;font-size:12px;color:#000;letter-spacing:0;transform:scaleX(0.878)">0</div>
<div class="t" style="left:442px;top:511px;font-size:12px;color:#000;letter-spacing:0;transform:scaleX(0.893)">21474...</div>
<div class="a" style="left:1px;top:526px;width:890px;height:1px;background:#f0f0f0"></div>
<svg style="position:absolute;left:41px;top:529px" width="7" height="13" shape-rendering="crispEdges"><rect x="0" y="0" width="7" height="13" fill="#000"/><rect x="1" y="1" width="5" height="11" fill="#808080"/><rect x="2" y="2" width="3" height="3" fill="#ff0000"/><rect x="2" y="8" width="3" height="3" fill="#00ff00"/></svg>
<div class="t" style="left:55px;top:528px;font-size:12px;color:#000;letter-spacing:0;transform:scaleX(0.876)">TextCommsEnableTextField</div>
<div class="t" style="left:207px;top:528px;font-size:12px;color:#000;letter-spacing:0;transform:scaleX(0.855)">0: No</div>
<div class="t" style="left:442px;top:528px;font-size:12px;color:#000;letter-spacing:0;transform:scaleX(0.878)">1</div>
<div class="a" style="left:1px;top:543px;width:890px;height:1px;background:#f0f0f0"></div>
<div class="a" style="left:201px;top:0px;width:1px;height:538px;background:#f0f0f0"></div>
<div class="a" style="left:381px;top:0px;width:1px;height:538px;background:#f0f0f0"></div>
<div class="a" style="left:436px;top:0px;width:1px;height:538px;background:#f0f0f0"></div>
<div class="a" style="left:491px;top:0px;width:1px;height:538px;background:#f0f0f0"></div>
<div class="a" style="left:551px;top:0px;width:1px;height:538px;background:#f0f0f0"></div>
</div>
<div class="a" style="left:1348px;top:45px;width:16px;height:561px;background:#efefef"></div>
<div class="a" style="left:1355px;top:128px;width:2px;height:408px;background:#858585;border-radius:1px"></div>
<div class="t" style="left:55px;top:620px;font-size:12px;line-height:17px;height:17px;color:#000;letter-spacing:0;transform:scaleX(0.900)">Name:</div>
<div class="t" style="left:56px;top:646px;font-size:12px;line-height:17px;height:17px;color:#000;letter-spacing:0;transform:scaleX(0.900)">Value:</div>
<div class="a" style="left:96px;top:619px;width:168px;height:20px;background:#f0f0f0;border:1px solid #dcdcdc;border-bottom:1px solid #8b8b8b;box-sizing:border-box;border-radius:2px"></div>
<div class="t" style="left:98px;top:620px;font-size:12px;line-height:17px;height:17px;color:#000;letter-spacing:0;transform:scaleX(0.890)">NetworkPort</div>
<div class="a" style="left:96px;top:645px;width:168px;height:20px;background:#fff;border:1px solid #dcdcdc;border-bottom:1px solid #8b8b8b;box-sizing:border-box;border-radius:2px"></div>
<div class="t" style="left:98px;top:646px;font-size:12px;line-height:17px;height:17px;color:#000;letter-spacing:0;transform:scaleX(0.950)">8010</div>
<div class="a" style="left:61px;top:673px;width:97px;height:21px;background:#f7f7f7;border:1px solid #e6e6e6;box-sizing:border-box;border-radius:3px"></div>
<div class="t" style="left:96px;top:675px;font-size:12px;line-height:17px;height:17px;color:#8a8a8a;letter-spacing:0;transform:scaleX(0.960)">Undo</div>
<div class="a" style="left:166px;top:673px;width:97px;height:21px;background:#f7f7f7;border:1px solid #e6e6e6;box-sizing:border-box;border-radius:3px"></div>
<div class="t" style="left:201px;top:675px;font-size:12px;line-height:17px;height:17px;color:#8a8a8a;letter-spacing:0;transform:scaleX(0.880)">Apply</div>
</body></html>
